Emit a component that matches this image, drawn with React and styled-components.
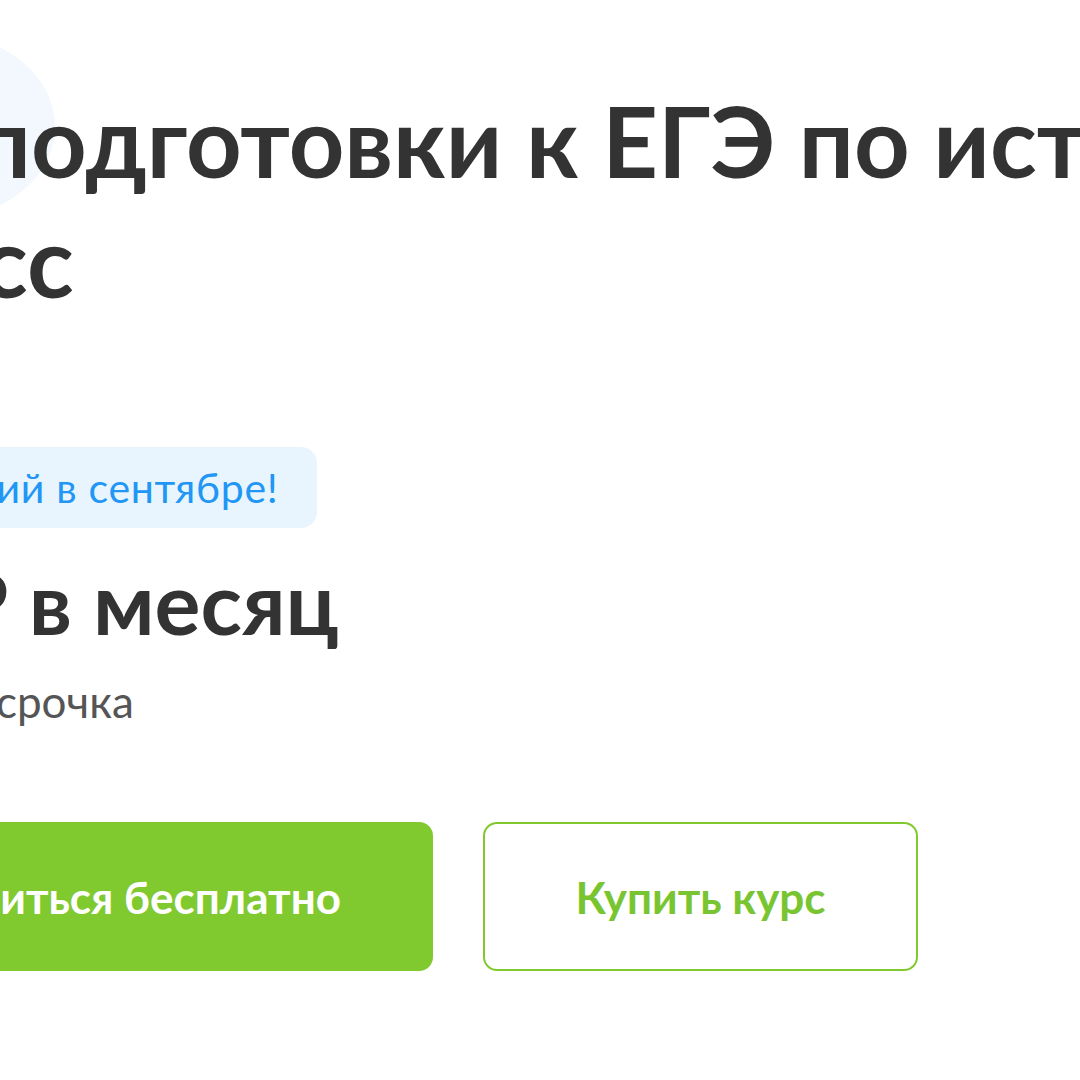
import React from "react";
import styled, { createGlobalStyle } from "styled-components";

const GlobalStyle = createGlobalStyle`
  html, body {
    margin: 0;
    padding: 0;
    background: #ffffff;
    overflow: hidden;
  }
  body {
    font-family: Lato, "Noto Sans", sans-serif;
  }
`;

const Page = styled.div`
  position: relative;
  width: 1080px;
  height: 1080px;
  overflow: hidden;
  background: #ffffff;

  /* soft blue blob peeking in at the top-left */
  &::before {
    content: "";
    position: absolute;
    left: -175px;
    top: 34px;
    width: 230px;
    height: 185px;
    border-radius: 50%;
    background: #f2f8fe;
  }
`;

const Content = styled.div`
  position: relative;
  margin-left: -250px;
  width: 1168px;
  padding-top: 81px;
  display: flex;
  flex-direction: column;
`;

const Title = styled.h1`
  margin: 0 0 0 -65px;
  text-indent: 52px;
  font-size: 97px;
  line-height: 120px;
  font-weight: 700;
  color: #333333;
  white-space: nowrap;
`;

const Badge = styled.div`
  align-self: flex-start;
  margin-top: 126px;
  height: 81px;
  display: flex;
  align-items: center;
  padding: 0 39px 0 15px;
  border-radius: 16px;
  background: #e8f5fe;
  color: #2196f5;
  font-size: 41px;
  letter-spacing: 0.7px;
  font-weight: 400;
  white-space: nowrap;
`;

const Price = styled.div`
  margin: 26px 0 0 -35px;
  font-size: 86px;
  line-height: 96px;
  font-weight: 700;
  color: #333333;
  white-space: nowrap;
`;

const Note = styled.div`
  margin-top: 25px;
  font-size: 44px;
  line-height: 52px;
  color: #555555;
  white-space: nowrap;
`;

const ButtonRow = styled.div`
  margin-top: 95px;
  display: grid;
  grid-template-columns: 1fr 435px;
  gap: 50px;
`;

const Button = styled.button`
  height: 149px;
  display: flex;
  align-items: center;
  justify-content: ${(p) => (p.$primary ? "flex-end" : "center")};
  padding: ${(p) => (p.$primary ? "0 90px 0 0" : "0")};
  border-radius: 14px;
  border: 2px solid #80c92f;
  background: ${(p) => (p.$primary ? "#80c92f" : "#ffffff")};
  color: ${(p) => (p.$primary ? "#ffffff" : "#79c531")};
  font-family: Lato, "Noto Sans", sans-serif;
  font-size: 44px;
  font-weight: 700;
  white-space: nowrap;
  cursor: pointer;
`;

export default function App() {
  return (
    <Page>
      <GlobalStyle />
      <Content>
        <Title>
          Курс подготовки к ЕГЭ по истории
          <br />
          11 класс
        </Title>
        <Badge>Старт занятий в сентябре!</Badge>
        <Price>2 990 ₽ в месяц</Price>
        <Note>Удобная рассрочка</Note>
        <ButtonRow>
          <Button $primary>Начать учиться бесплатно</Button>
          <Button>Купить курс</Button>
        </ButtonRow>
      </Content>
    </Page>
  );
}
